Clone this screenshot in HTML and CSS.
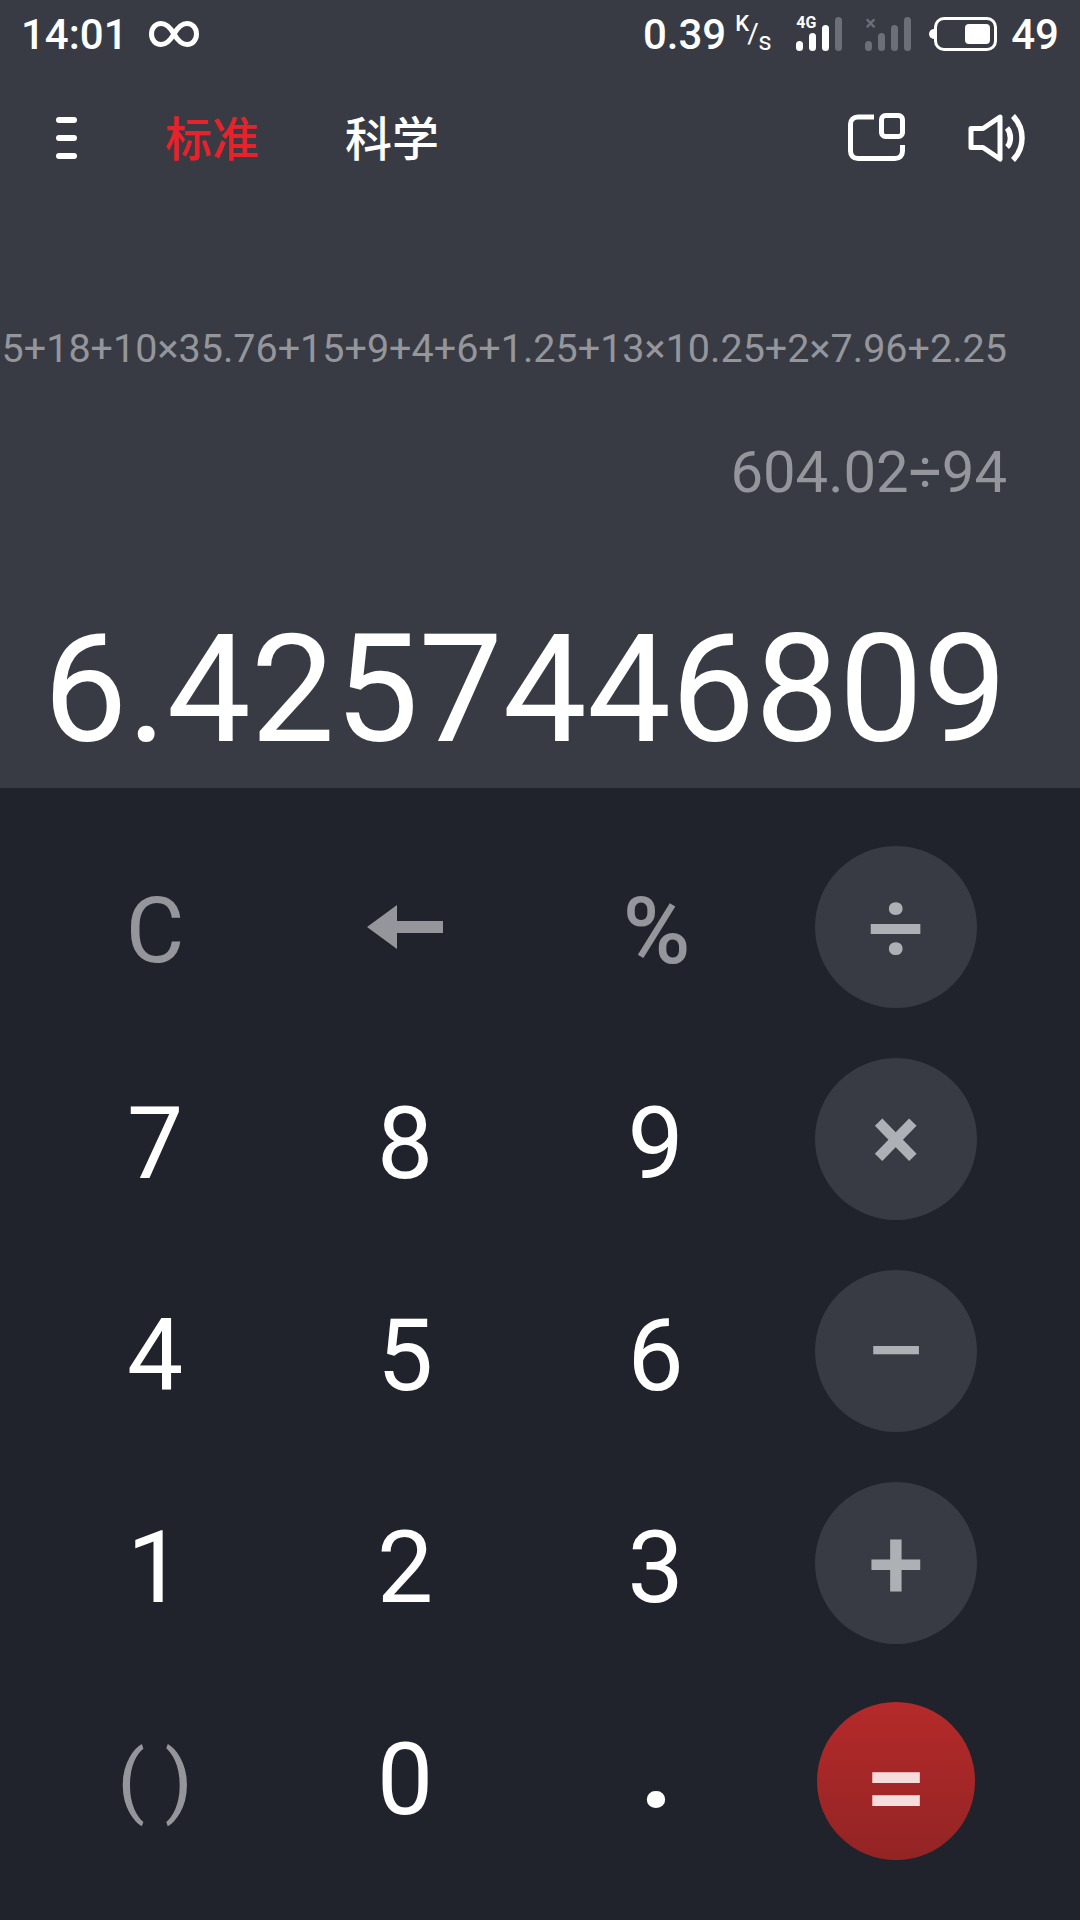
FILE: index.html
```html
<!DOCTYPE html>
<html lang="zh-CN">
<head>
  <meta charset="UTF-8" />
  <meta name="viewport" content="width=device-width, initial-scale=1.0"/>
  <title>计算器</title>
  <link rel="stylesheet" href="styles.css">
</head>
<body>
  <div class="screen">
    <div class="top">
      <div class="status">
        <span class="time">14:01</span>
        <svg class="infinity" width="50" height="26" viewBox="0 0 50 26">
          <path d="M25 13C21 6 17 2.500 12 2.500C6.500 2.500 2.500 7 2.500 13C2.500 19 6.500 23.500 12 23.500C17 23.500 21 20 25 13C29 6 33 2.500 38 2.500C43.500 2.500 47.500 7 47.500 13C47.500 19 43.500 23.500 38 23.500C33 23.500 29 20 25 13Z" fill="none" stroke="#fff" stroke-width="5"/>
        </svg>
        <div class="status-right">
          <span class="speed">0.39</span>
          <span class="unit"><span class="unit-k">K</span><span class="unit-slash">/</span><span class="unit-s">s</span></span>
          <div class="signal">
            <span class="signal-tag">4G</span>
            <i class="bar bar1"></i><i class="bar bar2"></i><i class="bar bar3"></i><i class="bar bar4 off"></i>
          </div>
          <div class="signal">
            <span class="signal-tag off-tag">×</span>
            <i class="bar bar1 off"></i><i class="bar bar2 off"></i><i class="bar bar3 off"></i><i class="bar bar4 off"></i>
          </div>
          <div class="battery"><div class="battery-fill"></div></div>
          <span class="level">49</span>
        </div>
      </div>

      <div class="toolbar">
        <div class="menu"><i></i><i></i><i></i></div>
        <span class="tab active">标准</span>
        <span class="tab">科学</span>
        <svg class="tool-pip" width="60" height="50" viewBox="0 0 60 50">
          <path d="M27 4H11C6.500 4 3.500 7 3.500 11V38C3.500 42.500 6.500 45.500 11 45.500H48C52.500 45.500 55.500 42.500 55.500 38V32" fill="none" stroke="#fff" stroke-width="5"/>
          <rect x="34.500" y="2.500" width="21" height="21" rx="4" fill="none" stroke="#fff" stroke-width="5"/>
        </svg>
        <svg class="tool-sound" width="60" height="50" viewBox="0 0 60 50">
          <path d="M33 4L16 15.500H4V34.500H16L33 46Z" fill="none" stroke="#fff" stroke-width="5" stroke-linejoin="round"/>
          <path d="M40 15C44.500 20 44.500 30 40 34" fill="none" stroke="#fff" stroke-width="5.500"/>
          <path d="M46 3C58 15 58 35 46 47" fill="none" stroke="#fff" stroke-width="5.500"/>
        </svg>
      </div>

      <div class="history"><span>5+18+10×35.76+15+9+4+6+1.25+13×10.25+2×7.96+2.25</span></div>
      <div class="expr">604.02÷94</div>
      <div class="result">6.4257446809</div>
    </div>

    <div class="keys">
      <div class="key dim"><span class="clear">C</span></div>
      <div class="key">
        <svg width="76" height="44" viewBox="0 0 76 44"><path d="M0 22L30 0V16H76V28H30V44Z" fill="#94969b"/></svg>
      </div>
      <div class="key dim"><span class="percent">%</span></div>
      <div class="key"><div class="op op-div">÷</div></div>

      <div class="key"><span class="num">7</span></div>
      <div class="key"><span class="num">8</span></div>
      <div class="key"><span class="num">9</span></div>
      <div class="key"><div class="op">×</div></div>

      <div class="key"><span class="num">4</span></div>
      <div class="key"><span class="num">5</span></div>
      <div class="key"><span class="num">6</span></div>
      <div class="key"><div class="op op-minus">−</div></div>

      <div class="key"><span class="num">1</span></div>
      <div class="key"><span class="num">2</span></div>
      <div class="key"><span class="num">3</span></div>
      <div class="key"><div class="op op-plus">+</div></div>

      <div class="key dim"><span class="parens">( )</span></div>
      <div class="key"><span class="zero">0</span></div>
      <div class="key"><span class="dot">.</span></div>
      <div class="key"><div class="op equals">=</div></div>
    </div>
  </div>
</body>
</html>
```
FILE: styles.css
```css
html, body {
  margin: 0;
  padding: 0;
}
body {
  font-family: Roboto, "Noto Sans CJK SC", sans-serif;
  background: #20232c;
  color: #fff;
}
.screen {
  width: 1080px;
  height: 1920px;
  overflow: hidden;
}
.top {
  height: 788px;
  background: #383b43;
  overflow: hidden;
}

/* status bar */
.status {
  display: flex;
  align-items: center;
  height: 68px;
  padding: 0 21px 0 21px;
}
.time {
  font-size: 42px;
  font-weight: 500;
}
.infinity {
  margin-left: 21px;
}
.status-right {
  display: flex;
  align-items: center;
  margin-left: auto;
}
.speed, .level {
  font-size: 42px;
  font-weight: 500;
}
.unit {
  position: relative;
  width: 38px;
  height: 40px;
  margin: 0 22px 0 10px;
  font-size: 22px;
  font-weight: 500;
}
.unit-k { position: absolute; left: -1px; top: -3px; }
.unit-slash { position: absolute; left: 11px; top: 3px; font-size: 28px; font-weight: 400; }
.unit-s { position: absolute; left: 22px; top: 12px; font-size: 26px; font-weight: 400; }
.signal {
  position: relative;
  display: flex;
  align-items: flex-end;
  gap: 6px;
  height: 34px;
  margin-right: 23px;
}
.signal-tag {
  position: absolute;
  left: 0;
  top: -3px;
  font-size: 16px;
  font-weight: 700;
  line-height: 18px;
}
.off-tag {
  color: #6c6f77;
  font-size: 20px;
}
.bar {
  display: block;
  width: 7px;
  background: #fff;
  border-radius: 4px;
}
.bar.off { background: #6c6f77; }
.bar1 { height: 10px; }
.bar2 { height: 18px; }
.bar3 { height: 26px; }
.bar4 { height: 34px; }
.battery {
  position: relative;
  box-sizing: border-box;
  width: 63px;
  height: 34px;
  margin-right: 14px;
  padding: 4px;
  border: 3px solid #fff;
  border-radius: 10px;
  display: flex;
  justify-content: flex-end;
}
.battery::before {
  content: "";
  position: absolute;
  left: -8px;
  top: 9px;
  width: 5px;
  height: 10px;
  background: #fff;
  border-radius: 5px 0 0 5px;
}
.battery-fill {
  width: 25px;
  background: #fff;
  border-radius: 4px;
}

/* tabs row */
.toolbar {
  display: flex;
  align-items: center;
  height: 70px;
  margin-top: 35px;
}
.menu {
  display: flex;
  flex-direction: column;
  gap: 12px;
  margin-left: 56px;
  width: 21px;
}
.menu i {
  display: block;
  height: 6px;
  background: #fff;
  border-radius: 3px;
}
.tab {
  font-size: 47px;
  line-height: 62px;
  padding-bottom: 4px;
  font-weight: 500;
  font-family: "Noto Sans CJK SC", sans-serif;
}
.tab.active {
  color: #e8222a;
  margin-left: 88px;
  margin-right: 86px;
}
.tool-pip {
  margin-left: auto;
  margin-right: 60px;
}
.tool-sound {
  margin-right: 53px;
}

/* display */
.history {
  display: flex;
  justify-content: flex-end;
  margin: 0 73px 0 0;
  padding-top: 151px;
  white-space: nowrap;
  font-size: 39.500px;
  line-height: 50px;
  color: #94969b;
}
.expr {
  margin-top: 63px;
  padding-right: 73px;
  text-align: right;
  font-size: 58px;
  line-height: 70px;
  color: #94969b;
}
.result {
  margin-top: 93px;
  padding-right: 73px;
  text-align: right;
  font-size: 149.500px;
  line-height: 180px;
  white-space: nowrap;
}

/* keypad */
.keys {
  display: grid;
  grid-template-columns: 250px 250px 251px 230px;
  grid-template-rows: repeat(4, 212px) 224px;
  padding: 33px 0 0 30px;
}
.key {
  display: flex;
  align-items: center;
  justify-content: center;
  font-size: 100px;
}
.num {
  padding-top: 8px;
}
.zero {
  padding-bottom: 4px;
}
.dim { color: #94969b; }
.clear { font-size: 90px; padding-top: 8px; }
.percent { font-size: 92px; font-weight: 500; padding-top: 8px; margin-left: 2px; }
.parens { font-size: 80px; }
.dot {
  font-size: 115px;
  font-weight: 700;
  line-height: 100px;
  margin-bottom: 26px;
  margin-left: 2px;
}
.op {
  display: flex;
  align-items: center;
  justify-content: center;
  width: 162px;
  height: 162px;
  border-radius: 50%;
  background: #383b43;
  color: #adb0b5;
  font-size: 90px;
  font-weight: 700;
}
.op-div { font-size: 100px; font-weight: 500; }
.op-minus { font-size: 112px; font-weight: 400; }
.op-plus { font-size: 100px; font-weight: 500; }
.equals {
  width: 158px;
  height: 158px;
  padding-top: 10px;
  box-sizing: border-box;
  font-size: 112px;
  font-weight: 500;
  background: linear-gradient(to bottom, #b52a2a, #932424);
  color: #f6dcdc;
}
```
